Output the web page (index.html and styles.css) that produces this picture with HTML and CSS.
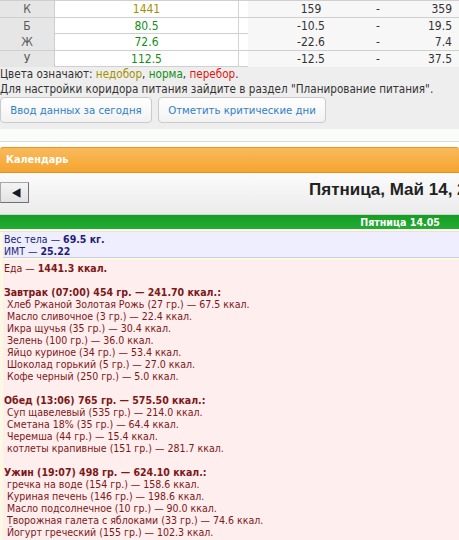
FILE: index.html
```html
<!DOCTYPE html>
<html lang="ru">
<head>
<meta charset="utf-8">
<title>Дневник питания</title>
<link rel="stylesheet" href="styles.css">
</head>
<body>
<div class="top">
  <div class="tbl">
    <div class="row">
      <div class="c1">К</div>
      <div class="c2 under">1441</div>
      <div class="c3"><div class="rng"><span class="mn">159</span><span class="ds">-</span><span class="mx">359</span></div></div>
    </div>
    <div class="row">
      <div class="c1">Б</div>
      <div class="c2 ok">80.5</div>
      <div class="c3"><div class="rng"><span class="mn">-10.5</span><span class="ds">-</span><span class="mx">19.5</span></div></div>
    </div>
    <div class="row">
      <div class="c1">Ж</div>
      <div class="c2 ok">72.6</div>
      <div class="c3"><div class="rng"><span class="mn">-22.6</span><span class="ds">-</span><span class="mx">7.4</span></div></div>
    </div>
    <div class="row">
      <div class="c1">У</div>
      <div class="c2 ok">112.5</div>
      <div class="c3"><div class="rng"><span class="mn">-12.5</span><span class="ds">-</span><span class="mx">37.5</span></div></div>
    </div>
  </div>
  <div class="legend">
    <div>Цвета означают: <span class="under">недобор</span>, <span class="ok">норма</span>, <span class="over">перебор</span>.</div>
    <div>Для настройки коридора питания зайдите в раздел "Планирование питания".</div>
  </div>
  <div class="btns">
    <button class="btn btn-a" type="button">Ввод данных за сегодня</button>
    <button class="btn btn-b" type="button">Отметить критические дни</button>
  </div>
</div>
<div class="strip"></div>
<div class="panel">
  <div class="phead">Календарь</div>
  <div class="nav">
    <button class="prev" type="button"><svg width="9" height="10" viewBox="0 0 9 10"><polygon points="0,5 8,0.5 8,9.5" fill="#1a1a1a"/><line x1="8.5" y1="0.5" x2="8.5" y2="9.5" stroke="#5a78c8" stroke-width="1"/></svg></button>
    <div class="title">Пятница, Май 14, 2021</div>
  </div>
  <div class="day">Пятница 14.05</div>
  <div class="daybody">
    <div class="weight">
      <div>Вес тела — <b>69.5 кг.</b></div>
      <div>ИМТ — <b>25.22</b></div>
    </div>
    <div class="food">
      <div>Еда — <b>1441.3 ккал.</b></div>
      <div class="gap"></div>
      <div class="meal">Завтрак (07:00) 454 гр. — 241.70 ккал.:</div>
      <div class="item">Хлеб Ржаной Золотая Рожь (27 гр.) — 67.5 ккал.</div>
      <div class="item">Масло сливочное (3 гр.) — 22.4 ккал.</div>
      <div class="item">Икра щучья (35 гр.) — 30.4 ккал.</div>
      <div class="item">Зелень (100 гр.) — 36.0 ккал.</div>
      <div class="item">Яйцо куриное (34 гр.) — 53.4 ккал.</div>
      <div class="item">Шоколад горький (5 гр.) — 27.0 ккал.</div>
      <div class="item">Кофе черный (250 гр.) — 5.0 ккал.</div>
      <div class="gap"></div>
      <div class="meal">Обед (13:06) 765 гр. — 575.50 ккал.:</div>
      <div class="item">Суп щавелевый (535 гр.) — 214.0 ккал.</div>
      <div class="item">Сметана 18% (35 гр.) — 64.4 ккал.</div>
      <div class="item">Черемша (44 гр.) — 15.4 ккал.</div>
      <div class="item">котлеты крапивные (151 гр.) — 281.7 ккал.</div>
      <div class="gap"></div>
      <div class="meal">Ужин (19:07) 498 гр. — 624.10 ккал.:</div>
      <div class="item">гречка на воде (154 гр.) — 158.6 ккал.</div>
      <div class="item">Куриная печень (146 гр.) — 198.6 ккал.</div>
      <div class="item">Масло подсолнечное (10 гр.) — 90.0 ккал.</div>
      <div class="item">Творожная галета с яблоками (33 гр.) — 74.6 ккал.</div>
      <div class="item">Йогурт греческий (155 гр.) — 102.3 ккал.</div>
      <div class="gap"></div>
    </div>
  </div>
</div>
</body>
</html>
```
FILE: styles.css
```css
html, body {
  margin: 0;
  padding: 0;
}
body {
  width: 459px;
  overflow: hidden;
  background: #ffffff;
  font-family: "DejaVu Sans Condensed", "DejaVu Sans", sans-serif;
  font-size: 12px;
  color: #333333;
}
.top {
  background: #eeeeee;
  padding-bottom: 6px;
}
.tbl {
  border-top: 1px solid #cfcfcf;
  background: #ffffff;
}
.row {
  display: grid;
  grid-template-columns: 55px 184px 220px;
  height: 16.5px;
  box-sizing: border-box;
  border-bottom: 1px solid #cfcfcf;
  line-height: 16px;
}
.c1 {
  background: #e6e6e6;
  color: #5a5a5a;
  text-align: center;
  border-right: 1px solid #cfcfcf;
}
.c2 {
  text-align: center;
  border-right: 1px solid #d4d4d4;
}
.c3 {
  padding-left: 9px;
}
.rng {
  display: flex;
  height: 100%;
  background: #f7f7f7;
  color: #333333;
}
.mn {
  width: 126px;
  text-align: center;
}
.ds {
  width: 8px;
  padding-left: 2px;
}
.mx {
  flex: 1;
  text-align: right;
  padding-right: 7px;
}
.under { color: #a39100; }
.ok { color: #138f13; }
.over { color: #e51414; }
.legend {
  line-height: 15px;
  font-size: 11.6px;
  color: #333333;
}
.btns {
  display: flex;
  gap: 6px;
}
.btn {
  height: 26px;
  padding: 0;
  border: 1px solid #cacaca;
  border-radius: 4px;
  background: linear-gradient(#ffffff, #f2f2f2);
  color: #2f80c4;
  font-family: "DejaVu Sans Condensed", "DejaVu Sans", sans-serif;
  font-size: 11.3px;
  text-align: center;
}
.btn-a { width: 152px; }
.btn-b { width: 168px; }
.strip {
  height: 12px;
  background: #f9fcf9;
  border-bottom: 1px solid #dadada;
  margin-bottom: 5px;
}
.phead {
  height: 24px;
  border-top: 1px solid #e8941f;
  border-bottom: 1px solid #e39020;
  border-radius: 3px 3px 0 0;
  background: linear-gradient(#f8ba5c, #f7ad40 60%, #f5a530);
  color: #ffffff;
  font-weight: bold;
  font-size: 10.8px;
  line-height: 24px;
  padding-left: 6px;
}
.nav {
  height: 42px;
  box-sizing: border-box;
  padding-top: 7px;
  display: flex;
  align-items: flex-start;
  overflow: hidden;
  background: linear-gradient(#fbfbfb, #ebebeb);
  border-bottom: 1px solid #d0d0d0;
}
.prev {
  flex-shrink: 0;
  width: 29px;
  height: 21px;
  margin-top: 2px;
  padding: 0;
  border: 1px solid;
  border-color: #a8a8a8 #707070 #707070 #a8a8a8;
  background: linear-gradient(#f4f4f4, #e2e2e2);
  display: flex;
  align-items: center;
  justify-content: center;
}
.prev svg {
  display: block;
  margin-left: 3px;
}
.title {
  flex-shrink: 0;
  margin-left: 280px;
  font-family: "Liberation Sans", Arial, sans-serif;
  font-weight: bold;
  font-size: 17px;
  line-height: 20px;
  color: #222222;
  white-space: nowrap;
}
.day {
  height: 14px;
  background: linear-gradient(#159c24, #22ae32);
  color: #ffffff;
  font-weight: bold;
  font-size: 10.6px;
  line-height: 14px;
  text-align: right;
  padding-right: 19px;
}
.daybody {
  margin-top: 2px;
  border-top: 1px solid #ece6b8;
  background: #fcf9e2;
  padding-left: 3px;
  font-size: 10.5px;
  line-height: 12px;
}
.weight {
  background: #eeeeff;
  border-bottom: 1px solid #cdcdee;
  padding: 1px 0 0 1px;
  color: #1e1e78;
  margin-bottom: 2px;
}
.food {
  background: #ffeeee;
  padding: 2px 0 0 1px;
  color: #7c1818;
}
.gap { height: 12px; }
.meal { font-weight: bold; }
.item { padding-left: 3px; }
```
